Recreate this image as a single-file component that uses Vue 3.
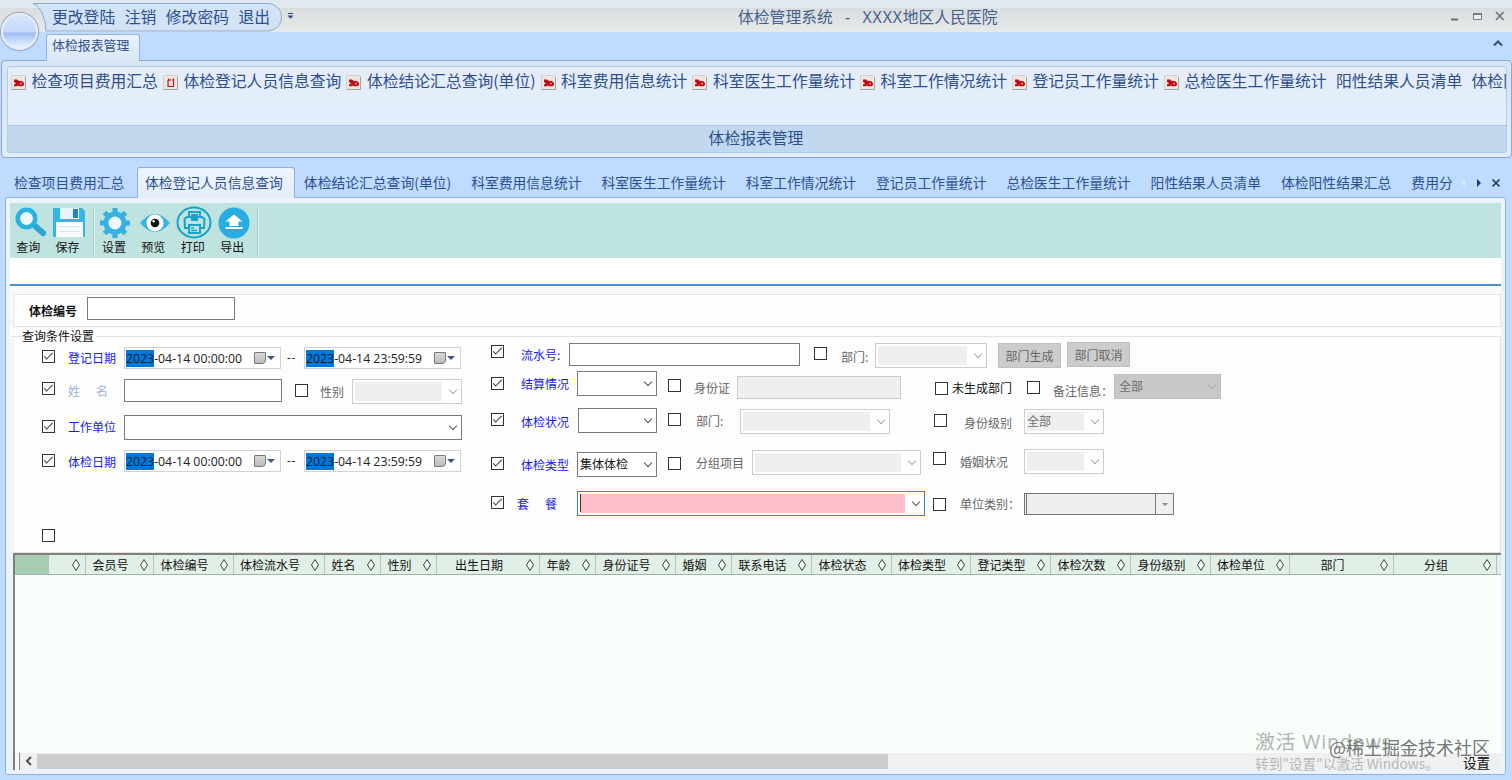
<template>
    <div class="window">
        <div class="title-bar">
            <svg class="quick-shape" width="300" height="34" viewBox="0 0 300 34">
                <path d="M33 3.500H268C286 5 286 29 268 31H46C45 18 42 8 33 3.500Z" fill="#d3e3f6" stroke="#8ea9cf"/>
            </svg>
            <div class="quick">
                <span v-for="item in quickList" :key="item">{{ item }}</span>
            </div>
            <svg class="quick-more" width="7" height="8" viewBox="0 0 7 8">
                <path d="M1 1.500H6" stroke="#2b4a80"/>
                <path d="M0.500 3.500H6.500L3.500 6.800Z" fill="#2b4a80"/>
            </svg>
            <div class="title">体检管理系统&nbsp;&nbsp; -&nbsp;&nbsp; <span>XXXX</span>地区人民医院</div>
            <svg class="win-btns" width="56" height="14" viewBox="0 0 56 14">
                <path d="M1 10.500H8" stroke="#6a6e73" stroke-width="2"/>
                <path d="M23.500 4.500H31.500V10.500H23.500Z" fill="#eef0f1" stroke="#777b80"/>
                <path d="M23 5H32" stroke="#777b80" stroke-width="2"/>
                <path d="M46 3L53.500 11M53.500 3L46 11" stroke="#74787d" stroke-width="1.800"/>
            </svg>
        </div>
        <div class="orb"></div>

        <div class="ribbon-tabs">
            <div class="ribbon-tab">体检报表管理</div>
            <svg class="collapse" width="12" height="8" viewBox="0 0 12 8">
                <path d="M2 6.500L6 2.500L10 6.500" fill="none" stroke="#2f4c7c" stroke-width="2"/>
            </svg>
        </div>
        <div class="ribbon">
            <div class="group">
                <div class="group-items">
                    <div v-for="(item, i) in reportList" :key="item" class="group-item">
                        <svg v-if="i < 8" width="15" height="15" viewBox="0 0 15 15">
                            <rect x="0.500" y="0.500" width="14" height="14" rx="1" fill="#ebe7e1" stroke="#d3cec8"/>
                            <path d="M0.500 14.500H14.500V2" fill="none" stroke="#a8a29c"/>
                            <path v-if="i === 1" d="M5 5V11.500H10.500V5H9M5 3.500L6.500 5.500L8 4.500M10.500 3.500V5" fill="none" stroke="#c8141c" stroke-width="1.200"/>
                            <path v-else d="M3 4.500H6L8 6H11L13 8V10L11.500 11.200H8L7 10.500L6 11.200H3V9.500L5 8.500L3 7ZM9.300 7.800V9.500H10.500V7.800Z" fill="#c00d18" fill-rule="evenodd"/>
                        </svg>
                        <span>{{ item }}</span>
                    </div>
                </div>
                <div class="group-title">体检报表管理</div>
            </div>
        </div>

        <div class="tabs">
            <div class="tab-list">
                <div v-for="(item, i) in tabList" :key="item" :class="`tab ${i === 1 ? 'active' : ''}`">{{ item }}</div>
            </div>
            <svg class="tab-ctrl" width="46" height="12" viewBox="0 0 46 12">
                <path d="M5 2V10L1 6Z" fill="#d9e9ff"/>
                <path d="M17 2V10L21 6Z" fill="#1f3864"/>
                <path d="M32.500 2.500L39.500 9.500M39.500 2.500L32.500 9.500" stroke="#1f3864" stroke-width="1.700"/>
            </svg>
        </div>

        <div class="page">
            <div class="toolbar">
                <div class="tool">
                    <svg width="34" height="34" viewBox="0 0 34 34">
                        <path d="M22 20L30 27" stroke="#2fa5d3" stroke-width="6" stroke-linecap="round"/>
                        <circle cx="13.500" cy="12.500" r="8.700" fill="#f2f9fd" stroke="#29b3e2" stroke-width="4.600"/>
                    </svg>
                    <span>查询</span>
                </div>
                <div class="tool">
                    <svg width="34" height="34" viewBox="0 0 34 34">
                        <path d="M1 2H30L33 5V31H1Z" fill="#35b6e4"/>
                        <path d="M8 2H27V13H8Z" fill="#e6f4fb"/>
                        <path d="M21 3H26V12H21Z" fill="#2187b4"/>
                        <path d="M4 16H31V31H4Z" fill="#f7fbfe"/>
                        <path d="M7 20.500H28M7 25.500H28" stroke="#d3e6ef"/>
                    </svg>
                    <span>保存</span>
                </div>
                <div class="split"></div>
                <div class="tool">
                    <svg width="34" height="34" viewBox="0 0 34 34">
                        <g stroke="#35aee0" stroke-width="5">
                            <path d="M17 2V32M2 17H32M6.500 6.500L27.500 27.500M27.500 6.500L6.500 27.500"/>
                        </g>
                        <circle cx="17" cy="17" r="9" fill="#eef8fd" stroke="#35b2e2" stroke-width="5"/>
                    </svg>
                    <span>设置</span>
                </div>
                <div class="tool">
                    <svg width="34" height="34" viewBox="0 0 34 34">
                        <path d="M2 17Q17 -1 32 17Q17 35 2 17Z" fill="#3bb4e3"/>
                        <circle cx="17" cy="17" r="8.500" fill="#fff"/>
                        <circle cx="17" cy="17" r="4.300" fill="#101418"/>
                        <circle cx="15.600" cy="15.300" r="1.200" fill="#fff"/>
                    </svg>
                    <span>预览</span>
                </div>
                <div class="tool">
                    <svg width="36" height="34" viewBox="0 0 36 34">
                        <g fill="none" stroke="#18a3cb" stroke-width="2">
                            <ellipse cx="18" cy="16.500" rx="16.500" ry="15"/>
                            <path d="M13 11V6H24V11M13 22H9L8.500 13L11 11H26L28.500 13L28 22H24M13 19H24V27H13Z"/>
                            <path d="M15 22H18M15 24.500H21" stroke-width="1.500"/>
                        </g>
                        <path d="M15 8H22V15H15Z" fill="#18a3cb"/>
                    </svg>
                    <span>打印</span>
                </div>
                <div class="tool">
                    <svg width="34" height="34" viewBox="0 0 34 34">
                        <circle cx="17" cy="17" r="15.500" fill="#27ade3"/>
                        <path d="M17 8.500L25.500 15.500H21.500V20H12.500V15.500H8.500Z" fill="#fff"/>
                        <path d="M8.500 22H25.500" stroke="#fff" stroke-width="2"/>
                    </svg>
                    <span>导出</span>
                </div>
                <div class="split last"></div>
            </div>
            <div class="strip"></div>

            <div class="form">
                <div class="number-box">
                    <b>体检编号</b>
                    <span class="input"></span>
                </div>

                <fieldset class="query">
                    <legend>查询条件设置</legend>
                    <div class="left">
                        <div class="row l1">
                            <i class="check on"></i>
                            <span class="label">登记日期</span>
                            <span class="date"><em>2023</em>-04-14 00:00:00<i class="cal"></i><i class="arrow"></i></span>
                            <span class="label dash">--</span>
                            <span class="date"><em>2023</em>-04-14 23:59:59<i class="cal"></i><i class="arrow"></i></span>
                        </div>
                        <div class="row l2">
                            <i class="check on"></i>
                            <span class="label pale"><span>姓</span><span>名</span></span>
                            <span class="input"></span>
                            <i class="check"></i>
                            <span class="label off">性别</span>
                            <span class="select disabled"></span>
                        </div>
                        <div class="row l3">
                            <i class="check on"></i>
                            <span class="label">工作单位</span>
                            <span class="select"></span>
                        </div>
                        <div class="row l4">
                            <i class="check on"></i>
                            <span class="label">体检日期</span>
                            <span class="date"><em>2023</em>-04-14 00:00:00<i class="cal"></i><i class="arrow"></i></span>
                            <span class="label dash">--</span>
                            <span class="date"><em>2023</em>-04-14 23:59:59<i class="cal"></i><i class="arrow"></i></span>
                        </div>
                        <i class="check"></i>
                    </div>
                    <div class="right">
                        <div class="row r1">
                            <i class="check on"></i>
                            <span class="label">流水号:</span>
                            <span class="input"></span>
                            <i class="check"></i>
                            <span class="label off">部门:</span>
                            <span class="select disabled"></span>
                            <span class="btn">部门生成</span>
                            <span class="btn">部门取消</span>
                        </div>
                        <div class="row r2">
                            <i class="check on"></i>
                            <span class="label">结算情况</span>
                            <span class="select"></span>
                            <i class="check"></i>
                            <span class="label off">身份证</span>
                            <span class="input disabled"></span>
                            <i class="check"></i>
                            <span class="label black">未生成部门</span>
                            <i class="check"></i>
                            <span class="label off">备注信息：</span>
                            <span class="select gray">全部</span>
                        </div>
                        <div class="row r3">
                            <i class="check on"></i>
                            <span class="label">体检状况</span>
                            <span class="select"></span>
                            <i class="check"></i>
                            <span class="label off">部门:</span>
                            <span class="select disabled"></span>
                            <i class="check"></i>
                            <span class="label off">身份级别</span>
                            <span class="select disabled">全部</span>
                        </div>
                        <div class="row r4">
                            <i class="check on"></i>
                            <span class="label">体检类型</span>
                            <span class="select">集体体检</span>
                            <i class="check"></i>
                            <span class="label off">分组项目</span>
                            <span class="select disabled"></span>
                            <i class="check"></i>
                            <span class="label off">婚姻状况</span>
                            <span class="select disabled"></span>
                        </div>
                        <div class="row r5">
                            <i class="check on"></i>
                            <span class="label"><span>套</span><span>餐</span></span>
                            <span class="select pink"></span>
                            <i class="check"></i>
                            <span class="label off">单位类别：</span>
                            <span class="combo"><i class="arrow"></i></span>
                        </div>
                    </div>
                </fieldset>
            </div>

            <div class="table">
                <div class="thead">
                    <div v-for="(item, i) in columns" :key="i" class="th">
                        <span>{{ item }}</span>
                        <svg v-if="i > 0" width="10" height="14" viewBox="0 0 10 14">
                            <path d="M5 1.500L8.500 7L5 12.500L1.500 7Z" fill="#f4faf6" stroke="#3c4440"/>
                        </svg>
                    </div>
                </div>
                <div class="tbody"></div>
                <div class="scroll">
                    <i class="grip"></i>
                    <svg width="17" height="16" viewBox="0 0 17 16">
                        <path d="M11 4L7 8L11 12" fill="none" stroke="#505050" stroke-width="2"/>
                    </svg>
                    <i class="thumb"></i>
                </div>
            </div>
        </div>

        <div class="activate">激活 Windows</div>
        <div class="activate-tip">转到"设置"以激活 Windows。</div>
        <div class="mark">@稀土掘金技术社区</div>
        <div class="setting">设置</div>
    </div>
</template>

<script setup>

import {ref} from "vue";

let quickList = ref(["更改登陆", "注销", "修改密码", "退出"])
let reportList = ref([
    "检查项目费用汇总",
    "体检登记人员信息查询",
    "体检结论汇总查询(单位)",
    "科室费用信息统计",
    "科室医生工作量统计",
    "科室工作情况统计",
    "登记员工作量统计",
    "总检医生工作量统计",
    "阳性结果人员清单",
    "体检阳性结果汇总"
])
let tabList = ref([...reportList.value, "费用分类"])
let columns = ref([
    "", "", "会员号", "体检编号", "体检流水号", "姓名", "性别", "出生日期", "年龄", "身份证号",
    "婚姻", "联系电话", "体检状态", "体检类型", "登记类型", "体检次数", "身份级别", "体检单位", "部门", "分组"
])
</script>

<style>
body {
    margin: 0;
    overflow: hidden;
}
</style>

<style scoped>
.window {
    width: 1512px;
    height: 780px;
    position: relative;
    overflow: hidden;
    display: flex;
    flex-direction: column;
    background: #bfdbff;
    font-family: "Noto Sans CJK SC", sans-serif;
    font-size: 12px;
    color: #2d4f8e;
    white-space: nowrap;
}
.window * {
    box-sizing: border-box;
}
svg {
    flex: none;
    display: block;
}
i, em {
    font-style: normal;
}

/* 标题栏 */
.title-bar {
    height: 32px;
    flex: none;
    display: flex;
    align-items: center;
    position: relative;
    background: linear-gradient(#dfe8ef 0, #e2e9ee 8px, #d9dddf 8px, #e8eaea 32px);
    font-size: 15.8px;
}
.quick-shape {
    position: absolute;
    left: 0;
    top: 0;
}
.quick {
    position: relative;
    width: 234px;
    margin-left: 52px;
    display: flex;
    gap: 9.500px;
    line-height: 34px;
    padding-top: 1px;
}
.quick-more {
    margin-left: 1px;
}
.title {
    margin-left: 444px;
    width: 300px;
    line-height: 34px;
    padding-top: 1px;
    color: #46608c;
    font-family: "Noto Sans", "Noto Sans CJK SC", sans-serif;
}
.title span {
    letter-spacing: 0.800px;
}
.win-btns {
    margin-left: auto;
    margin-right: 6px;
}
.orb {
    position: absolute;
    left: 1px;
    top: 13px;
    width: 37px;
    height: 37px;
    border-radius: 50%;
    border: 2px solid #e8eef7;
    box-shadow: 0 0 1px 1px #8f9fb8;
    background: linear-gradient(#d9e5fa 0, #c7d9fa 50%, #9dbdf2 56%, #c0d8fb 74%, #eaf5ff 100%);
}

/* 功能区 */
.ribbon-tabs {
    height: 28px;
    flex: none;
    display: flex;
    justify-content: space-between;
}
.ribbon-tab {
    margin: 2px 0 0 46px;
    width: 94px;
    height: 27px;
    position: relative;
    z-index: 1;
    border: 1px solid #8db2e3;
    border-bottom: 0;
    border-radius: 3px 3px 0 0;
    background: linear-gradient(#eaf3fe, #dbe6f4);
    font-size: 12.900px;
    line-height: 20px;
    padding-left: 5px;
}
.collapse {
    margin: 7px 8px 0 0;
}
.ribbon {
    height: 98px;
    flex: none;
    margin: 0 0 0 1px;
    padding: 5px 4px 4px 5px;
    border: 1px solid #85a9dc;
    border-radius: 4px;
    background: linear-gradient(#d8e3f3, #e2edfb);
}
.group {
    height: 87px;
    overflow: hidden;
    border: 1px solid #aecbf0;
    border-radius: 3px;
    background: linear-gradient(#e4ecf8, #e3effe);
    display: flex;
    flex-direction: column;
}
.group-items {
    height: 58px;
    display: flex;
    padding: 2px 0 0 3px;
    gap: 5px;
    font-size: 15.800px;
    line-height: 24px;
}
.group-item {
    flex: none;
    display: flex;
    gap: 5.500px;
}
.group-item svg {
    margin-top: 6px;
}
.group-item:nth-child(n+9) {
    margin-left: 4.300px;
}
.group-title {
    flex: 1;
    border-top: 1px solid #a9caee;
    background: #c2d8ef;
    font-size: 15.800px;
    line-height: 24px;
    padding-right: 2px;
    text-align: center;
}

/* 页签 */
.tabs {
    height: 40px;
    flex: none;
    display: flex;
    align-items: flex-end;
    padding-left: 4px;
    font-size: 13.800px;
}
.tab-list {
    width: 1449px;
    height: 31px;
    display: flex;
    overflow: hidden;
    position: relative;
    z-index: 1;
}
.tab {
    flex: none;
    height: 31px;
    line-height: 30px;
    padding: 0 10px;
}
.tab.active {
    margin: 0 -1px 0 2.500px;
    padding: 0 11px 0 7px;
    border: 1px solid #8faedd;
    border-bottom: 0;
    border-radius: 3px 3px 0 0;
    background: linear-gradient(#edf4fe, #e3edfb);
    line-height: 29px;
}
.tab-ctrl {
    margin: 0 0 9px 7px;
}

/* 页面主体 */
.page {
    height: 578px;
    flex: none;
    margin: -1px 6px 0 5px;
    padding: 5px 4px 4px;
    border: 1px solid #8eb1e6;
    border-radius: 3px;
    background: #edf3fb;
    color: #111;
}
.toolbar {
    height: 55px;
    display: flex;
    background: #bfe3df;
}
.tool {
    width: 39.400px;
    padding: 3px 3px 0 0;
    display: flex;
    flex-direction: column;
    align-items: center;
    line-height: 14px;
}
.tool svg {
    margin-left: 3px;
}
.split {
    width: 2px;
    height: 47px;
    margin: 5px 1px 0 4px;
    background: #e7f2f2;
    border-left: 1px solid #acccca;
}
.strip {
    height: 28px;
    background: #fff;
    border-bottom: 2px solid #4c93c8;
}
.form {
    background: #fdfdfd;
}
.number-box {
    height: 42px;
    border: solid #fafafa;
    border-width: 8px 0 1px 3px;
    background: #fdfefd;
    box-shadow: inset 0 0 0 1px #e4e4e4;
    display: flex;
    align-items: flex-start;
    padding-left: 16px;
}
.number-box b {
    width: 58px;
    line-height: 34px;
}
.number-box .input {
    width: 148px;
    height: 23px;
    margin-top: 3px;
}

.query {
    display: flex;
    height: 225px;
    margin: 0;
    padding: 0;
    border: 1px solid #e2e2e2;
    border-left-width: 4px;
    border-left-color: #f6f6f6;
    min-width: 0;
}
.query legend {
    padding: 0 2px 0 0;
    margin-left: 8px;
    line-height: 16px;
}
.left {
    width: 462px;
    padding: 3px 0 0 28px;
}
.right {
    margin: -2px 0 0 15px;
}
.row {
    display: flex;
    align-items: flex-start;
}
.row > * {
    flex: none;
}
.check {
    display: block;
    width: 13px;
    height: 13px;
    border: 1px solid #333;
    background: #fff;
}
.check.on::after {
    content: "";
    display: block;
    width: 8px;
    height: 3px;
    margin: 2px 0 0 1px;
    border: solid #333;
    border-width: 0 0 1px 1px;
    transform: rotate(-45deg);
}
.label {
    width: 56px;
    line-height: 16px;
    color: #1b1bec;
}
.label.off {
    color: #666;
}
.label.black {
    color: #111;
}
.label.dash {
    color: #222;
    width: 10px;
    font-family: "Open Sans", sans-serif;
    letter-spacing: 0.600px;
}
.label.pale {
    color: #9db4d4;
}
.label > span {
    display: inline-block;
    width: 28px;
}
.input {
    height: 23px;
    border: 1px solid #7a7a7a;
    background: #fff;
}
.input.disabled {
    border-color: #ccc;
    background: #efefef;
}
.select {
    display: flex;
    height: 25px;
    padding: 2px;
    border: 1px solid #7a7a7a;
    background: #fff;
    line-height: 18px;
}
.select::after {
    content: "";
    width: 5px;
    height: 5px;
    margin: 5px 3px 0 auto;
    border: solid #555;
    border-width: 0 1px 1px 0;
    transform: rotate(45deg);
}
.select.disabled {
    border-color: #ccc;
    color: #6d6d6d;
    background: linear-gradient(#efefef, #efefef) 2px 2px / calc(100% - 21px) calc(100% - 4px) no-repeat #fff;
}
.select.disabled::after, .select.gray::after {
    border-color: #aaa;
}
.select.gray {
    padding-left: 4px;
    border-color: #bfbfbf;
    background: #c8c8c8;
    color: #6d6d6d;
}
.select.pink {
    border-color: #2a86d4;
    background: linear-gradient(#ffc0cb, #ffc0cb) 2px 2px / calc(100% - 21px) calc(100% - 4px) no-repeat #fff;
}
.select.pink::before {
    content: "";
    width: 1px;
    height: 18px;
    background: #333;
}
.combo {
    display: flex;
    justify-content: flex-end;
    border: 1px solid #777;
    border-left: 3px double #777;
    background: #efefef;
}
.combo .arrow {
    width: 18px;
    border-left: 1px solid #777;
}
.combo .arrow::after {
    content: "";
    display: block;
    width: 0;
    margin: 9px 0 0 6px;
    border: 3px solid transparent;
    border-top: 3px solid #888;
}
.btn {
    height: 25px;
    width: 63px;
    border: 1px solid #bfbfbf;
    background: #ccc;
    color: #666;
    line-height: 23px;
    text-align: center;
}
.date {
    display: flex;
    align-items: center;
    width: 157px;
    height: 22px;
    padding-left: 1px;
    border: 1px solid #d2d2d2;
    background: #fff;
    font-family: "Open Sans", sans-serif;
    font-size: 12.300px;
    color: #222;
}
.date em {
    background: #0078d7;
    color: #06203c;
    line-height: 17px;
}
.cal {
    width: 12px;
    height: 12px;
    margin: 0 1px 0 auto;
    border: 1px solid #777;
    border-radius: 1px 1px 4px 1px;
    background: linear-gradient(#d9d9d9, #bcbcbc);
}
.date > .arrow {
    margin-right: 5px;
    border: 4px solid transparent;
    border-top: 4px solid #3d5588;
    border-bottom: 0;
}

.l1 { height: 32px; }
.l1 .check { margin-top: 3px; }
.l1 .label, .l4 .label { margin: 3px 0 0 13px; }
.l1 .label.dash, .l4 .label.dash { margin: 3px 7px 0 6px; }
.l2 { height: 36px; }
.l2 .check { margin-top: 3px; }
.l2 .label { margin: 4px 0 0 13px; }
.l2 .input { width: 158px; }
.l2 .input + .check { margin: 5px 0 0 13px; }
.l2 .label.off { width: 32px; margin: 5px 0 0 12px; }
.l2 .select { width: 110px; }
.l3 { height: 35px; }
.l3 .check { margin-top: 5px; }
.l3 .label { margin: 4px 0 0 13px; }
.l3 .select { width: 338px; }
.l4 { height: 79px; }
.l4 .check { margin-top: 4px; }
.l4 .label { margin-top: 4px; }

.r1 { height: 29px; }
.r1 > :nth-child(1) { margin: 3px 17px 0 0; }
.r1 > :nth-child(2) { margin-top: 5px; width: 48px; }
.r1 > :nth-child(3) { margin-top: 1px; width: 231px; }
.r1 > :nth-child(4) { margin: 5px 14px 0 14px; }
.r1 > :nth-child(5) { margin-top: 7px; width: 34px; }
.r1 > :nth-child(6) { margin: 1px 11px 0 0; width: 112px; }
.r1 > :nth-child(7) { margin: 1px 6px 0 0; }

.r2 { height: 37px; }
.r2 > :nth-child(1) { margin: 6px 17px 0 0; }
.r2 > :nth-child(2) { margin-top: 5px; }
.r2 > :nth-child(3) { width: 80px; }
.r2 > :nth-child(4) { margin: 8px 13px 0 11px; }
.r2 > :nth-child(5) { margin-top: 9px; width: 43px; }
.r2 > :nth-child(6) { margin-top: 5px; width: 164px; }
.r2 > :nth-child(7) { margin: 11px 4px 0 34px; }
.r2 > :nth-child(8) { margin-top: 9px; width: 75px; }
.r2 > :nth-child(9) { margin: 10px 13px 0 0; }
.r2 > :nth-child(10) { margin-top: 12px; width: 61px; }
.r2 > :nth-child(11) { margin-top: 3px; width: 107px; }

.r3 { height: 41px; }
.r3 > :nth-child(1) { margin: 5px 17px 0 0; }
.r3 > :nth-child(2) { margin-top: 6px; width: 57px; }
.r3 > :nth-child(3) { width: 79px; }
.r3 > :nth-child(4) { margin: 5px 15px 0 11px; }
.r3 > :nth-child(5) { margin-top: 5px; width: 44px; }
.r3 > :nth-child(6) { margin-top: 1px; width: 150px; }
.r3 > :nth-child(7) { margin: 6px 17px 0 44px; }
.r3 > :nth-child(8) { margin-top: 7px; width: 60px; }
.r3 > :nth-child(9) { margin-top: 1px; width: 80px; }

.r4 { height: 42px; }
.r4 > :nth-child(1) { margin: 8px 17px 0 0; }
.r4 > :nth-child(2) { margin-top: 8px; }
.r4 > :nth-child(3) { margin-top: 3px; width: 80px; }
.r4 > :nth-child(4) { margin: 8px 15px 0 11px; }
.r4 > :nth-child(5) { margin-top: 6px; }
.r4 > :nth-child(6) { margin-top: 1px; width: 169px; }
.r4 > :nth-child(7) { margin: 3px 14px 0 12px; }
.r4 > :nth-child(8) { margin-top: 5px; width: 64px; }
.r4 > :nth-child(9) { width: 80px; }

.r5 > :nth-child(1) { margin: 5px 13px 0 0; }
.r5 > :nth-child(2) { margin-top: 5px; width: 60px; }
.r5 > :nth-child(3) { width: 348px; }
.r5 > :nth-child(4) { margin: 7px 14px 0 8px; }
.r5 > :nth-child(5) { margin-top: 5px; width: 64px; }
.r5 > :nth-child(6) { margin-top: 2px; width: 150px; height: 22px; }

/* 表格 */
.table {
    height: 217px;
    margin-left: 3px;
    border: solid #808080;
    border-width: 2px 0 0 2px;
    background: #f8fffa;
    display: flex;
    flex-direction: column;
}
.thead {
    height: 20px;
    flex: none;
    display: grid;
    grid-template-columns: 34px 37px 68px 80px 91px 56px 56px 103px 56px 80px 56px 80px 80px 79px 80px 80px 80px 79px 104px 103px;
    background: #e2efe7;
    border-bottom: 1px solid #9fb5a6;
}
.th {
    display: flex;
    align-items: center;
    padding-right: 4px;
    border-right: 1px solid #b3c4b8;
}
.th span {
    flex: 1;
    padding-right: 4px;
    text-align: center;
}
.th:first-child {
    background: #a9cdb3;
}
.tbody {
    flex: 1;
}
.scroll {
    height: 17px;
    flex: none;
    display: flex;
    background: #f0f0f0;
}
.grip {
    width: 5px;
    border-right: 1px solid #888;
    background: #f8f8f8;
}
.thumb {
    width: 851px;
    height: 15px;
    margin-top: 1px;
    background: #cdcdcd;
}

/* 水印 */
.activate, .activate-tip, .mark, .setting {
    position: absolute;
}
.activate {
    left: 1255px;
    top: 728px;
    font-family: "Open Sans", "Noto Sans CJK SC", sans-serif;
    font-size: 19.800px;
    line-height: 28px;
    letter-spacing: 0.800px;
    color: #b0b4b2;
}
.activate-tip {
    left: 1255px;
    top: 753px;
    font-size: 13.700px;
    line-height: 20px;
    color: #b8b8b8;
}
.mark {
    left: 1329px;
    top: 734px;
    font-size: 18px;
    line-height: 26px;
    color: #777;
}
.setting {
    left: 1463px;
    top: 753px;
    font-size: 13.600px;
    line-height: 18px;
    color: #111;
}
</style>
